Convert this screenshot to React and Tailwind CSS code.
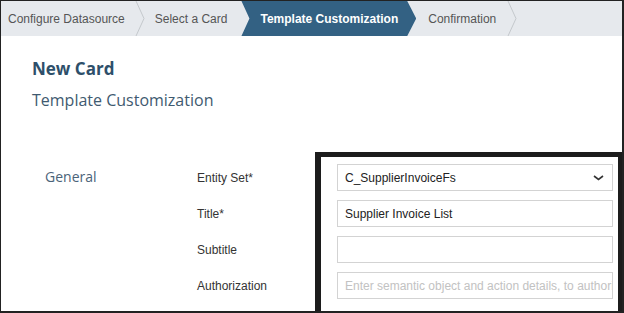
import React from 'react';

const Sep = () => (
  <svg width="10" height="35" viewBox="0 0 10 35" className="shrink-0">
    <polyline points="1,0 9,17.5 1,35" fill="none" stroke="#c4c8cc" strokeWidth="1" />
  </svg>
);

const Field = ({ value, placeholder, select }) => (
  <div className="h-[27px] w-[276px] border border-[#d3d3d3] bg-white flex items-center pl-[7px] pr-[8px] overflow-hidden">
    {value ? (
      <span className="text-[12px] text-[#222] whitespace-nowrap">{value}</span>
    ) : (
      <span className="text-[12px] text-[#c2c2c2] whitespace-nowrap">{placeholder}</span>
    )}
    {select && (
      <svg width="11" height="6" viewBox="0 0 11 6" className="ml-auto">
        <polyline points="1,1 5.5,4.5 10,1" fill="none" stroke="#333" strokeWidth="1.6" />
      </svg>
    )}
  </div>
);

export default function App() {
  const labels = ['Entity Set*', 'Title*', 'Subtitle', 'Authorization'];

  return (
    <div
      className="w-[624px] h-[313px] bg-white border-t border-l border-r-2 border-b-2 border-[#222] flex flex-col overflow-hidden"
      style={{ fontFamily: '"Liberation Sans", Arial, sans-serif' }}
    >
      {/* wizard steps */}
      <nav className="h-[35px] shrink-0 bg-[#e6e9ed] flex items-center text-[12px] text-[#555]">
        <span className="pl-[7px] pr-[10px] whitespace-nowrap">Configure Datasource</span>
        <Sep />
        <span className="pl-[10px] pr-[14px] whitespace-nowrap">Select a Card</span>
        <div
          className="h-full bg-[#336183] text-white font-bold flex items-center pl-[19px] pr-[18px] whitespace-nowrap"
          style={{ clipPath: 'polygon(0 0, calc(100% - 9px) 0, 100% 50%, calc(100% - 9px) 100%, 0 100%, 8px 50%)' }}
        >
          Template Customization
        </div>
        <span className="pl-[12px] pr-[11px] whitespace-nowrap">Confirmation</span>
        <Sep />
      </nav>

      <div className="pl-[31px] pt-[22px]" style={{ fontFamily: '"Open Sans", sans-serif' }}>
        <h1 className="text-[17px] font-bold text-[#2e4f6a] leading-[22px]">New Card</h1>
        <h2 className="text-[16px] text-[#3f5a70] leading-[22px] mt-[9px]">Template Customization</h2>
      </div>

      <div className="flex mt-[41px] flex-1">
        <div className="w-[196px] shrink-0 pl-[44px] pt-[13px]">
          <span className="text-[14px] text-[#4b6379]" style={{ fontFamily: '"Open Sans", sans-serif' }}>General</span>
        </div>
        <div className="w-[118px] shrink-0 pt-[12px] flex flex-col gap-[9px] text-[12px] text-[#333]">
          {labels.map((l) => (
            <div key={l} className="h-[27px] flex items-center">{l}</div>
          ))}
        </div>
        <div className="flex-1 border-l-[6px] border-t-[5px] border-r-[4px] border-[#1c1c1c] pl-[16px] pt-[7px] flex flex-col gap-[9px]">
          <Field value="C_SupplierInvoiceFs" select />
          <Field value="Supplier Invoice List" />
          <Field />
          <Field placeholder="Enter semantic object and action details, to authorize" />
        </div>
      </div>
    </div>
  );
}
